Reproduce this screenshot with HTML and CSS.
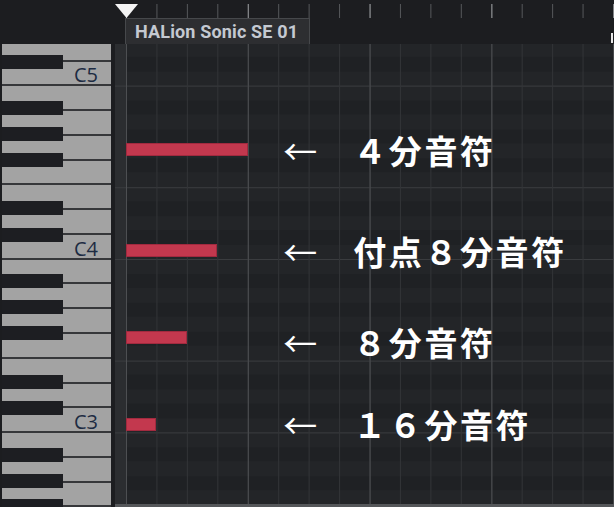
FILE: index.html
```html
<!DOCTYPE html>
<html lang="ja">
    <head>
        <meta charset="utf-8">
        <title>キーエディター</title>
        <link rel="stylesheet" href="styles.css">
    </head>
    <body>
        <div class="editor">
            <div class="topbar">
                <div class="corner"></div>
                <div class="ruler">
                    <svg class="locator" width="24" height="14" viewBox="0 0 24 14">
                        <polygon points="0,0 23,0 11.5,14" fill="#f4f4f4"/>
                    </svg>
                    <div class="ticks"></div>
                    <div class="track">HALion Sonic SE 01</div>
                    <span class="edge"></span>
                </div>
            </div>

            <div class="body">
                <div class="keys">
                    <div class="keylist">
                        <div class="wk d"></div>
                        <div class="wk c"><span class="oct">C5</span></div>
                        <div class="wk"></div>
                        <div class="wk a"></div>
                        <div class="wk g"></div>
                        <div class="wk f"></div>
                        <div class="wk"></div>
                        <div class="wk d"></div>
                        <div class="wk c"><span class="oct">C4</span></div>
                        <div class="wk"></div>
                        <div class="wk a"></div>
                        <div class="wk g"></div>
                        <div class="wk f"></div>
                        <div class="wk"></div>
                        <div class="wk d"></div>
                        <div class="wk c"><span class="oct">C3</span></div>
                        <div class="wk"></div>
                        <div class="wk a"></div>
                        <div class="wk g"></div>
                        <div class="wk f"></div>
                    </div>
                </div>

                <div class="roll-wrap">
                    <div class="roll-area">
                        <div class="strip"></div>
                        <div class="lanes">
                            <div class="roll">
                                <!-- G4 / C4 / F#3 / C3 -->
                                <div class="note" style="grid-row: 8; grid-column: 1 / 5"></div>
                                <div class="hint" style="grid-row: 7 / span 3">
                                    <span class="arrow">←</span><span class="name">４分音符</span>
                                </div>

                                <div class="note" style="grid-row: 15; grid-column: 1 / 4"></div>
                                <div class="hint" style="grid-row: 14 / span 3">
                                    <span class="arrow">←</span><span class="name">付点８分音符</span>
                                </div>

                                <div class="note" style="grid-row: 21; grid-column: 1 / 3"></div>
                                <div class="hint low" style="grid-row: 20 / span 3">
                                    <span class="arrow">←</span><span class="name">８分音符</span>
                                </div>

                                <div class="note" style="grid-row: 27; grid-column: 1 / 2"></div>
                                <div class="hint" style="grid-row: 26 / span 3">
                                    <span class="arrow">←</span><span class="name">１６分音符</span>
                                </div>
                            </div>
                        </div>
                    </div>
                    <div class="hbar"></div>
                </div>
            </div>
        </div>
    </body>
</html>
```

FILE: styles.css
```css
body {
    margin: 0;
    background: #1c1d20;
    font-family: "Noto Sans CJK JP", sans-serif;
    overflow: hidden;
}
.editor {
    width: 614px;
    height: 507px;
}

/* ruler */
.topbar {
    display: flex;
    height: 44px;
}
.corner { width: 115px; }
.ruler {
    position: relative;
    flex: 1;
}
.locator {
    position: absolute;
    left: 0;
    top: 4px;
}
.ticks {
    margin-top: 4px;
    height: 14px;
    background:
        linear-gradient(90deg, #8e9093 1px, transparent 1px) 11px 0 / 121.8px 100%,
        linear-gradient(90deg, #56585b 1px, transparent 1px) 11px 0 / 30.45px 100%;
}
.track {
    box-sizing: border-box;
    margin-left: 10px;
    width: 185px;
    height: 26px;
    padding-left: 9px;
    border: 1px solid #46484b;
    border-bottom: 0;
    background: #2d2e31;
    color: #c4c9d1;
    font: 700 18px/25px Roboto, sans-serif;
    letter-spacing: 0.15px;
    white-space: nowrap;
}
.edge {
    position: absolute;
    right: 1px;
    top: 33px;
    width: 2px;
    height: 10px;
    background: #e8e8e8;
}

/* keyboard */
.body {
    display: flex;
    height: 463px;
}
.keys {
    box-sizing: border-box;
    width: 111px;
    margin-right: 4px;
    padding-left: 2px;
    overflow: hidden;
}
.keylist {
    display: flex;
    flex-direction: column;
    margin-top: -7.2px;
}
.wk {
    position: relative;
    box-sizing: border-box;
    height: 24.77px;
    flex: none;
    display: flex;
    justify-content: flex-end;
    align-items: flex-end;
    padding-right: 13px;
    background: #a3a3a3;
    border-bottom: 2px solid #36373a;
}
.wk.c::before, .wk.d::before, .wk.f::before, .wk.g::before, .wk.a::before {
    content: "";
    position: absolute;
    left: 0;
    width: 61px;
    height: 14px;
    background: #1d1e22;
}
.wk.c::before { top: -7px; }
.wk.d::before { top: -9px; }
.wk.f::before { top: -8px; }
.wk.g::before { top: -9px; }
.wk.a::before { top: -10px; }
.oct {
    font: 20px/1 "Open Sans", sans-serif;
    color: #1d2b42;
    margin-bottom: -1px;
}

/* note lanes */
.roll-wrap {
    flex: 1;
    display: flex;
    flex-direction: column;
}
.roll-area {
    flex: 1;
    display: flex;
    min-height: 0;
}
.hbar {
    height: 3px;
    background: #55575a;
}
.strip {
    width: 11px;
    background:
        linear-gradient(#3a3c3f 0 1px, transparent 1px 101.15px, #3a3c3f 101.15px 102.15px, transparent 102.15px) 0 41.6px / 100% 173.4px,
        #2b2d30;
}
.lanes {
    flex: 1;
    overflow: hidden;
    background:
        linear-gradient(90deg, #4d4f52 1px, transparent 1px) 0 0 / 121.8px 100%,
        linear-gradient(90deg, #323437 1px, transparent 1px) 0 0 / 30.45px 100%,
        linear-gradient(
            #3a3c3f 0 1px,
            #232528 1px 14.45px,
            #1f2124 14.45px 28.9px,
            #232528 28.9px 43.35px,
            #1f2124 43.35px 57.8px,
            #232528 57.8px 72.25px,
            #1f2124 72.25px 86.7px,
            #232528 86.7px 101.15px,
            #3a3c3f 101.15px 102.15px,
            #232528 102.15px 115.6px,
            #1f2124 115.6px 130.05px,
            #232528 130.05px 144.5px,
            #1f2124 144.5px 158.95px,
            #232528 158.95px 173.4px
        ) 0 41.6px / 100% 173.4px;
}
.roll {
    display: grid;
    grid-template-columns: repeat(16, 30.45px);
    grid-template-rows: repeat(32, 14.45px);
    margin-top: -1.75px;
}
.note {
    box-sizing: border-box;
    align-self: start;
    height: 13px;
    background: #c3384e;
    border: 1px solid #a22a3f;
}
.hint {
    grid-column: 6 / -1;
    display: flex;
    align-items: center;
    padding-left: 5px;
    color: #fff;
    white-space: nowrap;
}
.hint.low { padding-top: 9px; }
.arrow {
    width: 70px;
    font-size: 34px;
    font-weight: 400;
    line-height: 1;
}
.name {
    font-size: 33px;
    font-weight: 700;
    letter-spacing: 2.6px;
    line-height: 1;
}
```
